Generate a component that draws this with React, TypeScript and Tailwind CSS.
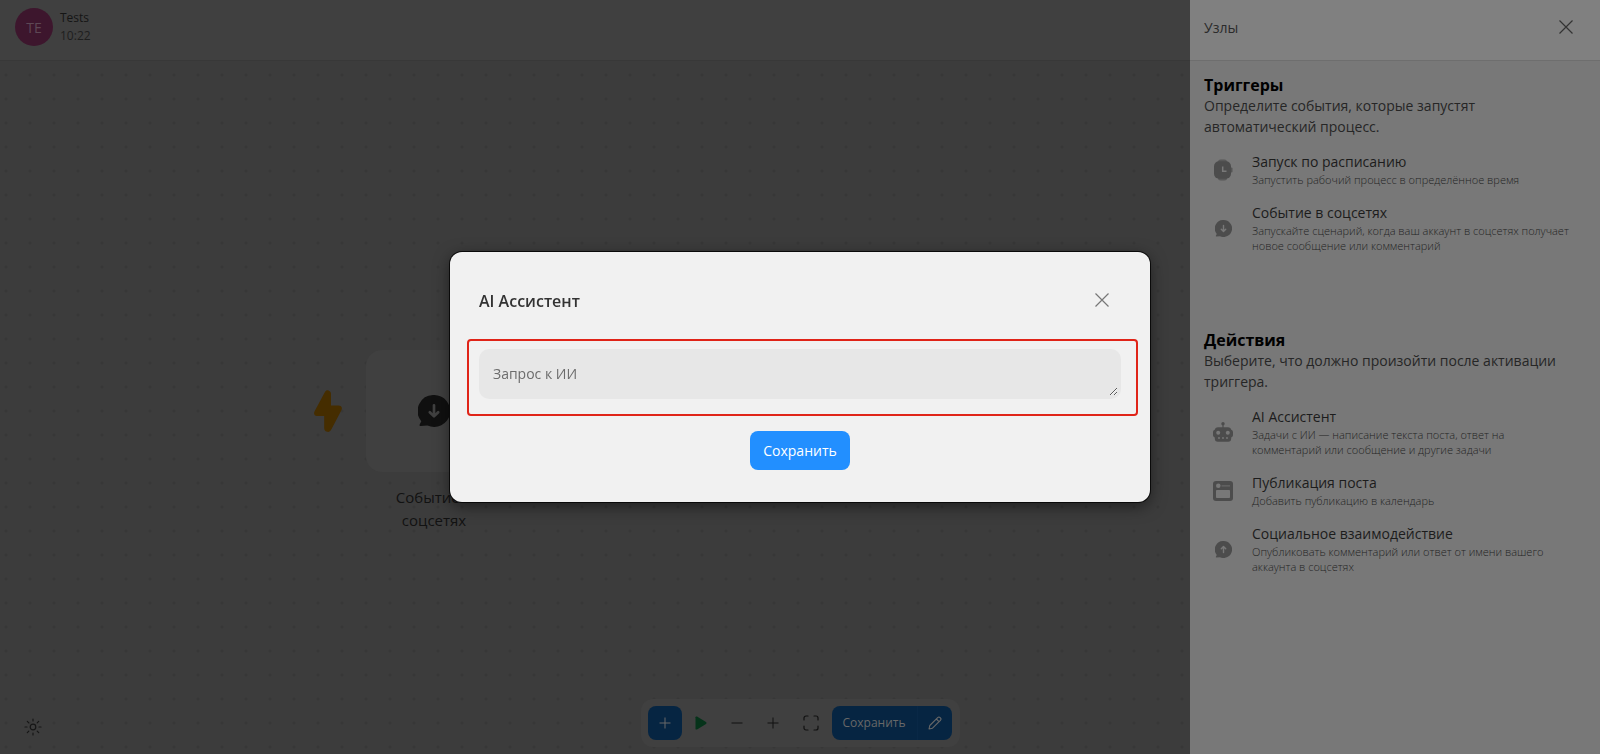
import type { ReactNode } from "react";

function CloseIcon({ className }: { className: string }) {
  return (
    <svg viewBox="0 0 14 14" className={className} fill="none" stroke="currentColor" strokeWidth="1.2" aria-hidden="true">
      <path d="M0.5 0.5 13.5 13.5M13.5 0.5 0.5 13.5" />
    </svg>
  );
}

function WatchIcon() {
  return (
    <svg viewBox="0 0 20 22" className="h-[22px] w-5" aria-hidden="true">
      <rect x="5" y=".5" width="9" height="21" rx="2.5" fill="currentColor" opacity=".7" />
      <rect x="17.5" y="8.5" width="2" height="5" rx="1" fill="currentColor" opacity=".8" />
      <rect x="1" y="2.2" width="17" height="17.6" rx="5" fill="currentColor" />
      <path d="M9.7 7.5v4.7h3.8" fill="none" stroke="#787878" strokeWidth="1.5" />
    </svg>
  );
}

function BubbleIcon({ className, up = false, arrow }: { className: string; up?: boolean; arrow: string }) {
  return (
    <svg viewBox="0 0 32 32" className={className} aria-hidden="true">
      <path fill="currentColor" d="M16 0a16 16 0 1 1-6.6 30.5L2.5 31c-.9.1-1.3-.8-.8-1.5l1.600-3.300A16 16 0 0 1 16 0z" />
      <path
        d={up ? "M16 21.500V11M11.800 14.800 16 10.600l4.200 4.200" : "M16 10.300V21M11.800 17.200 16 21.400l4.200-4.200"}
        fill="none"
        stroke={arrow}
        strokeWidth="2.7"
        strokeLinecap="round"
        strokeLinejoin="round"
      />
    </svg>
  );
}

function RobotIcon() {
  return (
    <svg viewBox="0 0 20 20" className="size-5" aria-hidden="true">
      <circle cx="10" cy="1.7" r="1.7" fill="currentColor" />
      <rect x="9.4" y="2.5" width="1.2" height="4" fill="currentColor" />
      <path
        fill="currentColor"
        d="M5 5.300h10c1.800 0 3 1 3.200 2.500 1.200.3 1.800 1.200 1.800 2.700v2.300c0 1.500-.6 2.400-1.800 2.700v1.200c0 1.700-1.200 3-3 3H4.800c-1.800 0-3-1.300-3-3v-1.200C.6 15.200 0 14.300 0 12.800v-2.300C0 9 .6 8.100 1.800 7.800 2 6.300 3.200 5.300 5 5.300z"
      />
      <g fill="#787878">
        <circle cx="5.2" cy="10.7" r="2" />
        <circle cx="14.8" cy="10.7" r="2" />
        <circle cx="6" cy="16" r=".9" />
        <circle cx="10" cy="16" r=".9" />
        <circle cx="14" cy="16" r=".9" />
      </g>
    </svg>
  );
}

function PostIcon() {
  return (
    <svg viewBox="0 0 20 20" className="size-5" aria-hidden="true">
      <rect width="20" height="20" rx="3" fill="currentColor" />
      <g fill="#787878">
        <circle cx="5.3" cy="4.7" r="2.3" />
        <rect x="8.5" y="4.2" width="8.5" height="1.3" opacity=".6" />
        <rect x="3" y="9" width="14" height="8" rx=".8" />
      </g>
    </svg>
  );
}

type Item = { title: string; text: string; icon: ReactNode };

const triggers: Item[] = [
  { title: "Запуск по расписанию", text: "Запустить рабочий процесс в определённое время", icon: <WatchIcon /> },
  {
    title: "Событие в соцсетях",
    text: "Запускайте сценарий, когда ваш аккаунт в соцсетях получает новое сообщение или комментарий",
    icon: <BubbleIcon className="size-[17px]" arrow="#787878" />,
  },
];

const actions: Item[] = [
  { title: "AI Ассистент", text: "Задачи с ИИ — написание текста поста, ответ на комментарий или сообщение и другие задачи", icon: <RobotIcon /> },
  { title: "Публикация поста", text: "Добавить публикацию в календарь", icon: <PostIcon /> },
  {
    title: "Социальное взаимодействие",
    text: "Опубликовать комментарий или ответ от имени вашего аккаунта в соцсетях",
    icon: <BubbleIcon className="size-[17px]" up arrow="#787878" />,
  },
];

function Section({ title, text, items }: { title: string; text: string; items: Item[] }) {
  return (
    <section>
      <h2 className="text-[16px] leading-5 font-bold text-black">{title}</h2>
      <p className="pr-6 text-[14px] leading-[21px] text-[#262626]">{text}</p>
      <ul className="mt-[15px] flex flex-col gap-4">
        {items.map((item) => (
          <li key={item.title} className="flex items-center gap-[18px] pr-7 pl-2">
            <span className="flex h-[22px] w-[22px] shrink-0 items-center justify-center text-[#4c4c4c]">{item.icon}</span>
            <div>
              <h3 className="text-[14px] leading-5 text-[#1c1c1c]">{item.title}</h3>
              <p className="text-[11px] leading-[15px] font-light text-[#242424]">{item.text}</p>
            </div>
          </li>
        ))}
      </ul>
    </section>
  );
}

export default function App() {
  return (
    <div className="relative flex min-h-screen flex-col bg-[#3c3c3c] font-['Open_Sans','Noto_Sans',sans-serif]">
      <header className="flex h-[61px] items-start gap-[7px] border-b border-[#383838] bg-[#404040] pt-2 pl-[15px]">
        <span className="flex size-[38px] items-center justify-center rounded-full bg-[#3d162d] text-[14px] text-[#5d4855]">TE</span>
        <div className="pt-px text-[12px] leading-[18px]">
          <div className="text-[#151515]">Tests</div>
          <div className="text-[#1e1e1e]">10:22</div>
        </div>
      </header>

      <main className="relative flex flex-1 flex-col justify-between bg-[radial-gradient(circle,#373737_1px,transparent_2px)] bg-size-[24px_24px] bg-position-[-6px_2px]">
        <div className="absolute top-[289px] left-[314px] flex items-start gap-6">
          <svg viewBox="0 0 28 42" className="mt-10 h-[42px] w-7" aria-hidden="true">
            <path fill="#452d00" d="M10.800 2.300C12 .2 13.200 0 14.500.5 16.500 1.200 17 2.500 17 4v11.500h7.500c3 0 4.200 2.300 2.800 5L17.300 39.500c-1 2-2.500 2.800-4.300 2.300-2-.5-2.800-2-2.800-3.800V26H3C.3 26-.6 23.700.6 21.300z" />
          </svg>
          <div className="flex w-[136px] flex-col items-center">
            <div className="flex h-[122px] w-full items-center justify-center rounded-2xl bg-[#404040] text-[#101010]">
              <BubbleIcon className="size-8" arrow="#404040" />
            </div>
            <p className="mt-[14px] w-28 text-center text-[15px] leading-[23px] text-[#121212]">Событие в соцсетях</p>
          </div>
        </div>
      </main>

      <footer className="absolute inset-x-0 bottom-[7px] flex items-center justify-center">
        <button type="button" aria-label="Тема" className="absolute left-6 text-[#161616]">
          <svg viewBox="0 0 18 18" className="mt-2 size-[18px]" fill="none" stroke="currentColor" strokeWidth="1.2" strokeLinecap="round" aria-hidden="true">
            <circle cx="9" cy="9" r="2.8" />
            <path d="M9 1v2M9 15V17M1 9h2M15 9H17M3.300 3.300l1.500 1.500M13.200 13.200l1.500 1.500M3.300 14.700 4.800 13.200M13.200 4.800l1.500-1.500" />
          </svg>
        </button>
        <div className="flex h-12 items-center gap-[3px] rounded-xl bg-[#404040] pr-2 pl-[7px] text-[#111]">
          <button type="button" aria-label="Добавить" className="flex size-[34px] items-center justify-center rounded-lg bg-[#062542] text-[#686868]">
            <svg viewBox="0 0 12 12" className="size-3" stroke="currentColor" aria-hidden="true"><path d="M6 .5v11M.5 6h11" /></svg>
          </button>
          <button type="button" aria-label="Запустить" className="flex h-[34px] w-[33px] items-center justify-center text-[#06331a]">
            <svg viewBox="0 0 12 14" className="h-3.5 w-3" fill="currentColor" aria-hidden="true"><path d="M.5 1.300C.5.500 1.300.2 2 .6l9 5.500c.7.500.7 1.300 0 1.800l-9 5.500c-.7.400-1.500.1-1.500-.7z" /></svg>
          </button>
          <button type="button" aria-label="Уменьшить" className="flex h-[34px] w-[33px] items-center justify-center">
            <svg viewBox="0 0 12 12" className="size-3" stroke="currentColor" aria-hidden="true"><path d="M.5 6h11" /></svg>
          </button>
          <button type="button" aria-label="Увеличить" className="flex h-[34px] w-[33px] items-center justify-center">
            <svg viewBox="0 0 12 12" className="size-3" stroke="currentColor" aria-hidden="true"><path d="M6 .5v11M.5 6h11" /></svg>
          </button>
          <button type="button" aria-label="Во весь экран" className="flex h-[34px] w-[36px] items-center justify-center">
            <svg viewBox="0 0 16 16" className="size-4" fill="none" stroke="currentColor" strokeWidth="1.2" strokeLinecap="round" aria-hidden="true">
              <path d="M1 5V3a2 2 0 0 1 2-2h2M11 1h2a2 2 0 0 1 2 2v2M15 11v2a2 2 0 0 1-2 2h-2M5 15H3a2 2 0 0 1-2-2v-2" />
            </svg>
          </button>
          <div className="flex h-[34px] items-center rounded-lg bg-[#062542] text-[#686868]">
            <button type="button" className="h-full w-[86px] border-r border-[#092846] text-[12px]">Сохранить</button>
            <button type="button" aria-label="Переименовать" className="flex h-full w-[34px] items-center justify-center">
              <svg viewBox="0 0 14 14" className="size-[14px]" fill="none" stroke="currentColor" strokeWidth="1.1" strokeLinejoin="round" aria-hidden="true">
                <path d="m1 13 .8-3.500L9.700 1.600c.7-.7 1.700-.7 2.400 0l.3.300c.7.700.7 1.700 0 2.400L4.500 12.200zM8.300 3l2.700 2.700" />
              </svg>
            </button>
          </div>
        </div>
      </footer>

      <aside className="fixed inset-y-0 right-0 w-[410px] bg-[#787878]">
        <div className="flex h-[61px] items-center justify-between border-b border-[#6e6e6e] bg-[#808080] pr-[27px] pb-[6px] pl-[14px]">
          <span className="text-[14px] text-[#2b2b2b]">Узлы</span>
          <button type="button" aria-label="Закрыть панель" className="text-[#333]"><CloseIcon className="size-[14px]" /></button>
        </div>
        <div className="flex flex-col gap-[77px] pt-[14px] pl-[14px]">
          <Section title="Триггеры" text="Определите события, которые запустят автоматический процесс." items={triggers} />
          <Section title="Действия" text="Выберите, что должно произойти после активации триггера." items={actions} />
        </div>
      </aside>

      <div className="fixed inset-0 flex items-center justify-center">
        <div role="dialog" aria-modal="true" aria-labelledby="dialog-title" className="w-full max-w-[700px] rounded-xl bg-[#f1f1f1] pt-9 pr-3 pb-8 pl-[17px] shadow-[0_0_0_1px_#0a0a0a,0_4px_16px_#00000080]">
          <div className="mb-[27px] flex h-6 items-center justify-between pr-[29px] pl-3">
            <h1 id="dialog-title" className="pt-0.5 text-[16px] font-semibold text-[#333]">AI Ассистент</h1>
            <button type="button" aria-label="Закрыть" className="text-[#777]"><CloseIcon className="size-[14px]" /></button>
          </div>
          <form onSubmit={(e) => e.preventDefault()} className="flex flex-col gap-[15px]">
            <div className="rounded-sm border-2 border-[#e02418] pt-2 pr-[15px] pb-[15px] pl-[10px]">
              <textarea
                aria-label="Запрос к ИИ"
                placeholder="Запрос к ИИ"
                rows={1}
                className="block h-[50px] w-full rounded-[10px] border-[3px] border-transparent bg-[#e7e7e7] px-[11px] py-[10px] text-[14px] leading-6 text-[#333] outline-none placeholder:text-[#6c6c6c]"
              />
            </div>
            <div className="flex justify-center pr-[5px]">
              <button type="submit" className="h-[39px] w-[100px] rounded-lg bg-[#228fff] text-[14px] text-white">Сохранить</button>
            </div>
          </form>
        </div>
      </div>
    </div>
  );
}
